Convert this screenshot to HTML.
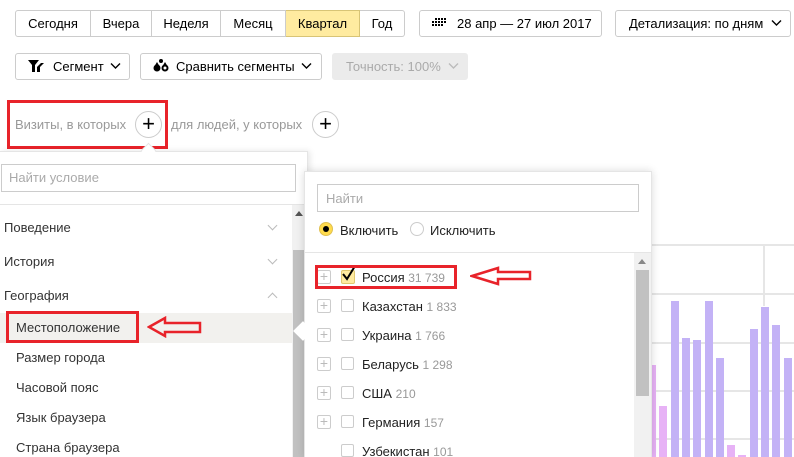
<!DOCTYPE html>
<html style="overflow:hidden;width:794px;height:457px"><head><meta charset="utf-8"><style>
*{box-sizing:border-box;margin:0;padding:0}
body{width:794px;height:457px;overflow:hidden;background:#fff;font-family:"Liberation Sans",Arial,sans-serif;font-size:13px;color:#000;position:relative}
.a{position:absolute}
.btn{position:absolute;border:1px solid #ccc;border-radius:3px;height:27px;line-height:25px;background:#fff;white-space:nowrap}
.seg{position:absolute;top:10px;height:27px;line-height:25px;border:1px solid #ccc;border-left:none;text-align:center}
.t{position:absolute;white-space:nowrap}
.g{color:#999}
.grid{position:absolute;left:651px;width:143px;height:2px;background:#e6e6e6}
.bar{position:absolute;bottom:0;background:#c3b2f6}
.pk{background:#e7b2f6}
.red{position:absolute;border:3px solid #e8232a}
.cb{position:absolute;width:13px;height:13px;border:1px solid #ccc;border-radius:2px;left:341px}
.pl{position:absolute;left:317px;width:14px;height:14px;border:1px solid #ccc;border-radius:2px;color:#bbb;font-size:14px;line-height:11px;text-align:center}
.chev{position:absolute;width:7px;height:7px;border-right:1px solid #bbb;border-bottom:1px solid #bbb}
</style></head><body>
<div class="seg" style="left:15px;width:76px;border-left:1px solid #ccc;border-radius:3px 0 0 3px">Сегодня</div>
<div class="seg" style="left:91px;width:61px">Вчера</div>
<div class="seg" style="left:152px;width:69px">Неделя</div>
<div class="seg" style="left:221px;width:65px">Месяц</div>
<div class="seg" style="left:286px;width:74px;background:#ffeba0;border-color:#d8c476">Квартал</div>
<div class="seg" style="left:360px;width:45px;border-radius:0 3px 3px 0">Год</div>
<div class="btn" style="left:419px;top:10px;width:183px;padding-left:37px">28 апр — 27 июл 2017</div>
<svg class="a" style="left:432px;top:18px" width="14" height="10"><g fill="#000"><rect x="3" y="0" width="2" height="2"/><rect x="6" y="0" width="2" height="2"/><rect x="9" y="0" width="2" height="2"/><rect x="12" y="0" width="2" height="2"/><rect x="0" y="3" width="2" height="2"/><rect x="3" y="3" width="2" height="2"/><rect x="6" y="3" width="2" height="2"/><rect x="9" y="3" width="2" height="2"/><rect x="12" y="3" width="2" height="2"/><rect x="0" y="6" width="2" height="2"/><rect x="3" y="6" width="2" height="2"/><rect x="6" y="6" width="2" height="2"/><rect x="9" y="6" width="2" height="2"/></g></svg>
<div class="btn" style="left:615px;top:10px;width:176px;padding-left:13px">Детализация: по дням</div>
<svg class="a" style="left:771px;top:19px" width="11" height="8"><path d="M1 1.5L5.5 6 10 1.5" stroke="#000" stroke-width="1.4" fill="none"/></svg>
<div class="btn" style="left:15px;top:53px;width:115px;padding-left:37px">Сегмент</div>
<svg class="a" style="left:28px;top:60px" width="16" height="13"><path d="M0 0H11L7 5V12H4V5Z M9 7L13 3H16L12 7V12H9Z" fill="#000"/></svg>
<svg class="a" style="left:110px;top:62px" width="11" height="8"><path d="M1 1.5L5.5 6 10 1.5" stroke="#000" stroke-width="1.4" fill="none"/></svg>
<div class="btn" style="left:140px;top:53px;width:182px;padding-left:35px">Сравнить сегменты</div>
<svg class="a" style="left:153px;top:58px" width="16" height="15"><circle cx="4" cy="10" r="3.5" fill="#000"/><path d="M4 4L1 9H7Z" fill="#000"/><circle cx="12" cy="10" r="3.5" fill="#000"/><path d="M12 4L9 9H15Z" fill="#000"/><circle cx="8" cy="3" r="2" fill="#000"/><circle cx="12" cy="10" r="1.5" fill="#fff"/></svg>
<svg class="a" style="left:301px;top:62px" width="11" height="8"><path d="M1 1.5L5.5 6 10 1.5" stroke="#000" stroke-width="1.4" fill="none"/></svg>
<div class="btn" style="left:332px;top:53px;width:136px;padding-left:13px;background:#ebebeb;border-color:#ebebeb;color:#aaa">Точность: 100%</div>
<svg class="a" style="left:448px;top:62px" width="11" height="8"><path d="M1 1.5L5.5 6 10 1.5" stroke="#bbb" stroke-width="1.4" fill="none"/></svg>
<div class="t g" style="left:15px;top:117px">Визиты, в которых</div>
<div class="a" style="left:135px;top:111px;width:27px;height:27px;border:1px solid #ccc;border-radius:50%;text-align:center;line-height:24px;font-size:22px">+</div>
<div class="t g" style="left:171px;top:117px">для людей, у которых</div>
<div class="a" style="left:312px;top:111px;width:27px;height:27px;border:1px solid #ccc;border-radius:50%;text-align:center;line-height:24px;font-size:22px">+</div>
<div class="red" style="left:7px;top:100px;width:161px;height:49px"></div>
<div class="grid" style="top:244px"></div>
<div class="grid" style="top:293px"></div>
<div class="grid" style="top:342px"></div>
<div class="grid" style="top:390px"></div>
<div class="grid" style="top:438px"></div>
<div class="a" style="left:763px;top:244px;width:2px;height:62px;background:#e6e6e6"></div>
<div class="bar pk" style="left:648px;width:8px;top:365px;height:92px"></div>
<div class="bar pk" style="left:659px;width:8px;top:406px;height:51px"></div>
<div class="bar" style="left:671px;width:8px;top:301px;height:156px"></div>
<div class="bar" style="left:682px;width:8px;top:338px;height:119px"></div>
<div class="bar" style="left:693px;width:8px;top:340px;height:117px"></div>
<div class="bar" style="left:705px;width:8px;top:301px;height:156px"></div>
<div class="bar" style="left:716px;width:8px;top:358px;height:99px"></div>
<div class="bar pk" style="left:727px;width:8px;top:445px;height:12px"></div>
<div class="bar pk" style="left:738px;width:8px;top:455px;height:2px"></div>
<div class="bar" style="left:750px;width:8px;top:329px;height:128px"></div>
<div class="bar" style="left:761px;width:8px;top:307px;height:150px"></div>
<div class="bar" style="left:772px;width:8px;top:325px;height:132px"></div>
<div class="bar" style="left:784px;width:8px;top:358px;height:99px"></div>
<div class="a" style="left:0;top:151px;width:308px;height:306px;background:#fff;border-top:1px solid #e5e5e5;border-right:1px solid #e5e5e5;box-shadow:2px 0 6px rgba(0,0,0,.1)"></div>
<div class="a" style="left:143px;top:145px;width:11px;height:11px;background:#fff;border-left:1px solid #e5e5e5;border-top:1px solid #e5e5e5;transform:rotate(45deg)"></div>
<div class="a" style="left:1px;top:164px;width:295px;height:28px;border:1px solid #ccc"></div>
<div class="t" style="left:9px;top:170px;color:#aaa">Найти условие</div>
<div class="a" style="left:0;top:204px;width:307px;height:1px;background:#e5e5e5"></div>
<div class="a" style="left:292px;top:205px;width:14px;height:252px;background:#f1f1f1"></div>
<div class="a" style="left:293px;top:250px;width:12px;height:207px;background:#c1c1c1"></div>
<svg class="a" style="left:295px;top:211px" width="8" height="5"><path d="M0 5L4 0 8 5Z" fill="#555"/></svg>
<div class="t" style="left:4px;top:220px;color:#333">Поведение</div>
<div class="chev" style="left:269px;top:222px;transform:rotate(45deg)"></div>
<div class="t" style="left:4px;top:254px;color:#333">История</div>
<div class="chev" style="left:269px;top:256px;transform:rotate(45deg)"></div>
<div class="t" style="left:4px;top:288px;color:#333">География</div>
<div class="chev" style="left:269px;top:294px;transform:rotate(-135deg)"></div>
<div class="a" style="left:0;top:313px;width:292px;height:30px;background:#f2f1ee"></div>
<div class="t" style="left:16px;top:320px;color:#333">Местоположение</div>
<div class="red" style="left:6px;top:311px;width:133px;height:32px"></div>
<svg class="a" style="left:147px;top:316px" width="56" height="22"><path d="M2 11L18 2V7H53V16H18V20Z" fill="none" stroke="#e8232a" stroke-width="2.5"/></svg>
<div class="t" style="left:16px;top:350px;color:#333">Размер города</div>
<div class="t" style="left:16px;top:380px;color:#333">Часовой пояс</div>
<div class="t" style="left:16px;top:410px;color:#333">Язык браузера</div>
<div class="t" style="left:16px;top:440px;color:#333">Страна браузера</div>
<div class="a" style="left:304px;top:171px;width:348px;height:286px;background:#fff;border:1px solid #e5e5e5;border-bottom:none;box-shadow:0 0 8px rgba(0,0,0,.15)"></div>
<div class="a" style="left:296px;top:324px;width:14px;height:14px;background:#fff;transform:rotate(45deg)"></div>
<div class="a" style="left:317px;top:184px;width:322px;height:28px;border:1px solid #ccc"></div>
<div class="t" style="left:326px;top:191px;color:#aaa">Найти</div>
<div class="a" style="left:319px;top:222px;width:14px;height:14px;border-radius:50%;background:#ffdb4d;border:1px solid #e0c050"></div>
<div class="a" style="left:323px;top:226px;width:6px;height:6px;border-radius:50%;background:#000"></div>
<div class="t" style="left:340px;top:223px;color:#222">Включить</div>
<div class="a" style="left:410px;top:222px;width:14px;height:14px;border-radius:50%;border:1px solid #ccc"></div>
<div class="t" style="left:430px;top:223px;color:#222">Исключить</div>
<div class="a" style="left:305px;top:252px;width:346px;height:1px;background:#e5e5e5"></div>
<div class="a" style="left:634px;top:253px;width:17px;height:204px;background:#f1f1f1"></div>
<div class="a" style="left:636px;top:270px;width:13px;height:126px;background:#c1c1c1"></div>
<svg class="a" style="left:638px;top:259px" width="8" height="5"><path d="M0 5L4 0 8 5Z" fill="#888"/></svg>
<div class="pl" style="top:270px">+</div>
<div class="cb" style="top:270px;width:14px;height:14px;background:#ffeba0;border-color:#e0c870"></div>
<svg class="a" style="left:341px;top:265px" width="16" height="17"><path d="M2 9L6 14 14 1" stroke="#000" stroke-width="2" fill="none"/></svg>
<div class="t" style="left:362px;top:270px;color:#222">Россия <span class="g" style="font-size:12px">31 739</span></div>
<div class="red" style="left:315px;top:265px;width:142px;height:24px"></div>
<svg class="a" style="left:470px;top:266px" width="62" height="20"><path d="M2 10L28 2V6H60V13H28V18Z" fill="none" stroke="#e8232a" stroke-width="2.5"/></svg>
<div class="pl" style="top:299px">+</div><div class="cb" style="top:299px"></div>
<div class="t" style="left:362px;top:299px;color:#222">Казахстан <span class="g" style="font-size:12px">1 833</span></div>
<div class="pl" style="top:328px">+</div><div class="cb" style="top:328px"></div>
<div class="t" style="left:362px;top:328px;color:#222">Украина <span class="g" style="font-size:12px">1 766</span></div>
<div class="pl" style="top:357px">+</div><div class="cb" style="top:357px"></div>
<div class="t" style="left:362px;top:357px;color:#222">Беларусь <span class="g" style="font-size:12px">1 298</span></div>
<div class="pl" style="top:386px">+</div><div class="cb" style="top:386px"></div>
<div class="t" style="left:362px;top:386px;color:#222">США <span class="g" style="font-size:12px">210</span></div>
<div class="pl" style="top:415px">+</div><div class="cb" style="top:415px"></div>
<div class="t" style="left:362px;top:415px;color:#222">Германия <span class="g" style="font-size:12px">157</span></div>
<div class="cb" style="top:444px"></div>
<div class="t" style="left:362px;top:444px;color:#222">Узбекистан <span class="g" style="font-size:12px">101</span></div>
</body></html>
